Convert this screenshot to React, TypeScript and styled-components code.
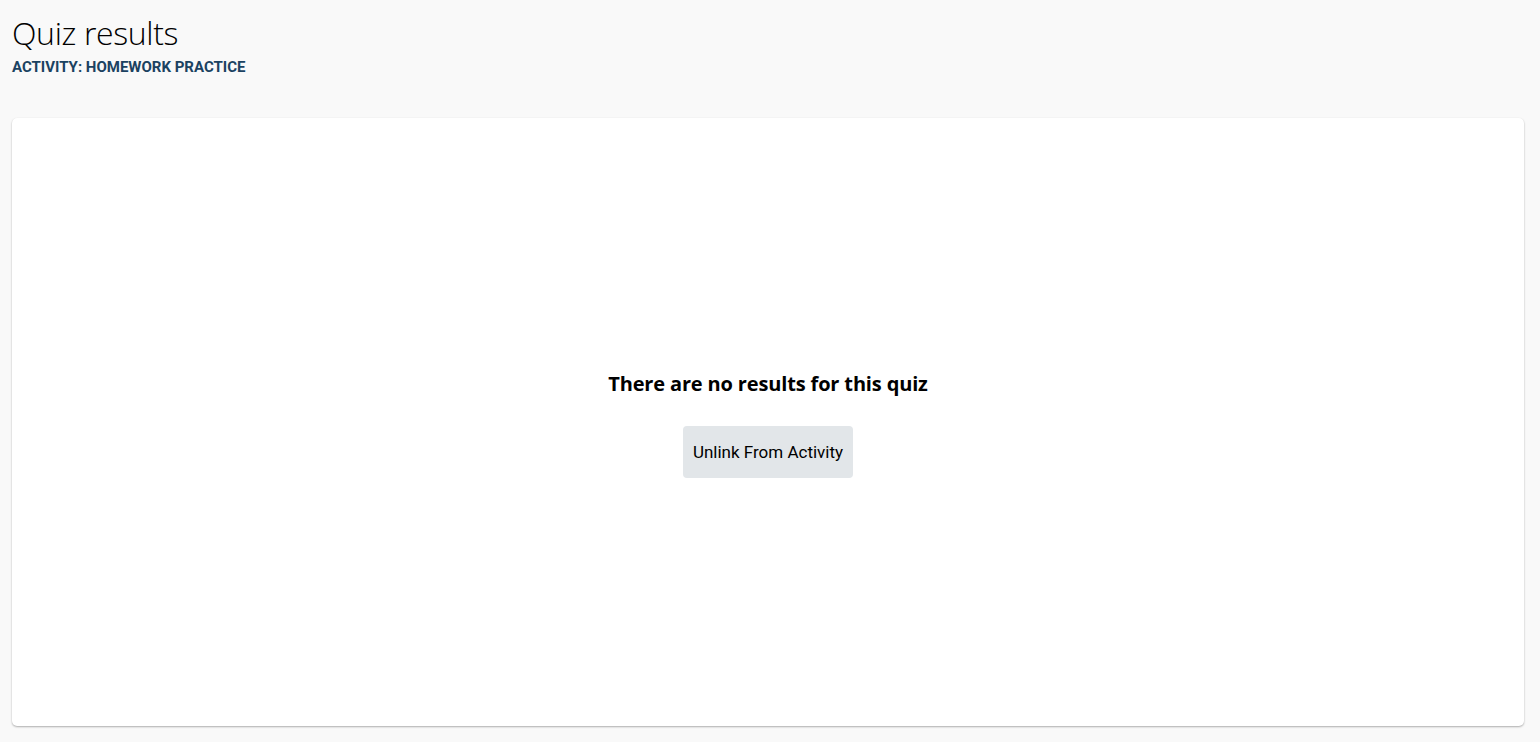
import React from 'react';
import styled, { createGlobalStyle } from 'styled-components';

const GlobalStyle = createGlobalStyle`
  html, body {
    margin: 0;
    padding: 0;
    background-color: #f9f9f9;
    font-family: Roboto, "Liberation Sans", sans-serif;
  }
`;

const Page = styled.div`
  display: flex;
  flex-direction: column;
  height: 742px;
  box-sizing: border-box;
  padding: 12px 16px 16px 12px;
`;

const Header = styled.header`
  display: flex;
  flex-direction: column;
  margin-bottom: 43px;
`;

const Title = styled.h1`
  margin: 0;
  font-family: "Open Sans", sans-serif;
  font-weight: 300;
  font-size: 32px;
  line-height: 42px;
  color: #000;
  letter-spacing: -0.35px;
`;

const Subtitle = styled.div`
  margin-top: 5px;
  font-family: Roboto, sans-serif;
  font-weight: 700;
  font-size: 15px;
  line-height: 16px;
  color: #1b4261;
  text-transform: uppercase;
`;

const Card = styled.section`
  flex: 1;
  display: flex;
  flex-direction: column;
  align-items: center;
  justify-content: center;
  background-color: white;
  border-radius: 5px;
  box-shadow: 0 1px 2px rgba(0, 0, 0, 0.3), 0 0 1px rgba(0, 0, 0, 0.04);
  padding-top: 6px;
`;

const EmptyMessage = styled.h2`
  margin: 0 0 30px;
  font-family: "Open Sans", sans-serif;
  font-weight: 700;
  font-size: 20px;
  line-height: 24px;
  letter-spacing: -0.15px;
  color: #000;
`;

const Button = styled.button`
  border: none;
  border-radius: 4px;
  background-color: #e2e6e9;
  color: #000;
  font-family: Roboto, sans-serif;
  font-size: 17px;
  font-weight: 400;
  padding: 0 10px;
  height: 52px;
  cursor: pointer;
  :hover {
    opacity: 0.85;
  }
`;

export default function App() {
  return (
    <>
      <GlobalStyle />
      <Page>
        <Header>
          <Title>Quiz results</Title>
          <Subtitle>Activity: Homework Practice</Subtitle>
        </Header>
        <Card>
          <EmptyMessage>There are no results for this quiz</EmptyMessage>
          <Button>Unlink From Activity</Button>
        </Card>
      </Page>
    </>
  );
}
